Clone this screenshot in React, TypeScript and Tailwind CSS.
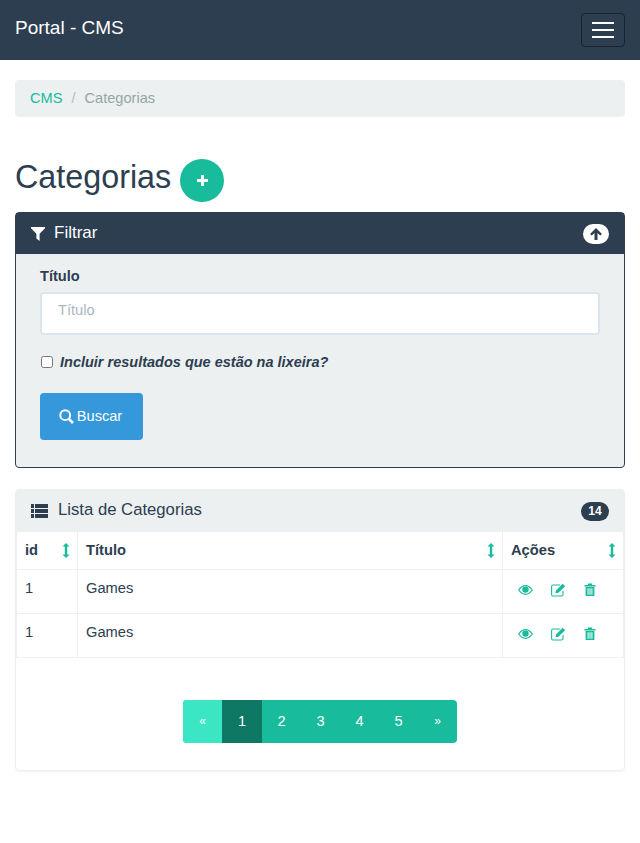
const rows = [
  { id: 1, title: 'Games' },
  { id: 1, title: 'Games' },
];

const pages = ['1', '2', '3', '4', '5'];

function SortIcon() {
  return (
    <svg width="8" height="15" viewBox="0 0 8 15" className="text-[#18bc9c] -mr-[1px]" fill="currentColor">
      <path d="M4 0 L7.5 3.6 H5.2 V11.4 H7.5 L4 15 L0.5 11.4 H2.8 V3.6 H0.5 Z" />
    </svg>
  );
}

function PlusIcon() {
  return (
    <svg width="11" height="11" viewBox="0 0 11 11" fill="currentColor">
      <path d="M4 0 H7 V4 H11 V7 H7 V11 H4 V7 H0 V4 H4 Z" />
    </svg>
  );
}

function FilterIcon() {
  return (
    <svg width="14" height="14" viewBox="0 0 14 14" fill="currentColor">
      <path d="M0 0 H14 V1.2 L8.6 6.8 V14 L5.4 11.4 V6.8 L0 1.2 Z" />
    </svg>
  );
}

function ArrowUpIcon() {
  return (
    <svg width="12" height="12" viewBox="0 0 12 12" fill="currentColor">
      <path d="M6 0 L12 6 L10.2 7.6 L7.5 4.9 V12 H4.5 V4.9 L1.8 7.6 L0 6 Z" />
    </svg>
  );
}

function SearchIcon() {
  return (
    <svg width="15" height="15" viewBox="0 0 15 15" fill="none" stroke="currentColor">
      <circle cx="6.2" cy="6.2" r="4.9" strokeWidth="2" />
      <path d="M9.8 9.8 L14 14" strokeWidth="2.6" />
    </svg>
  );
}

function ListIcon() {
  return (
    <svg width="17" height="14" viewBox="0 0 17 14" fill="currentColor">
      <path d="M0 0 H3 V4 H0 Z M4 0 H17 V4 H4 Z M0 5 H3 V9 H0 Z M4 5 H17 V9 H4 Z M0 10 H3 V14 H0 Z M4 10 H17 V14 H4 Z" />
    </svg>
  );
}

function EyeIcon() {
  return (
    <svg width="15" height="10" viewBox="0 0 15 10">
      <path d="M0.7 5 C3 1.8 5.2 0.7 7.5 0.7 C9.8 0.7 12 1.8 14.3 5 C12 8.2 9.8 9.3 7.5 9.3 C5.2 9.3 3 8.2 0.7 5 Z" fill="none" stroke="currentColor" strokeWidth="1.2" />
      <circle cx="7.5" cy="4.6" r="3.2" fill="currentColor" />
    </svg>
  );
}

function EditIcon() {
  return (
    <svg width="15" height="14" viewBox="0 0 15 14" fill="none" stroke="currentColor">
      <path d="M12 8 V11.5 C12 12.4 11.4 13 10.5 13 H2 C1.1 13 0.6 12.4 0.6 11.5 V3.5 C0.6 2.6 1.1 2 2 2 H9" strokeWidth="1.1" />
      <path d="M4.5 10 L5 7.6 L11.6 0.8 L14.2 3.2 L7 10 Z" fill="currentColor" stroke="none" />
    </svg>
  );
}

function TrashIcon() {
  return (
    <svg width="12" height="13" viewBox="0 0 12 13" fill="currentColor">
      <path d="M0.5 2 H4 V0.5 H8 V2 H11.5 V3.4 H0.5 Z" />
      <path fillRule="evenodd" d="M1.6 4 H10.4 V13 H1.6 Z M3.6 5.2 V11.8 H4.6 V5.2 Z M5.5 5.2 V11.8 H6.5 V5.2 Z M7.4 5.2 V11.8 H8.4 V5.2 Z" />
    </svg>
  );
}

function HeadCell({ label, className }: { label: string; className: string }) {
  return (
    <th className={`border border-[#ecf0f1] border-t-0 h-[37px] px-2 ${className}`}>
      <div className="flex items-center justify-between">
        <span className="font-bold">{label}</span>
        <SortIcon />
      </div>
    </th>
  );
}

export default function App() {
  return (
    <div className="min-h-[843px] bg-white text-[15px] leading-[22.5px] text-[#2c3e50] font-['Liberation_Sans',Arial,sans-serif]">
      {/* navbar */}
      <nav className="h-[60px] bg-[#2c3e50] px-[15px] flex items-center justify-between">
        <span className="text-[19px] text-white -mt-[3px]">Portal - CMS</span>
        <button className="w-[44px] h-[34px] border border-[#1a242f] rounded flex flex-col items-center justify-center gap-[5px]">
          <span className="block w-[22px] h-[2px] bg-white" />
          <span className="block w-[22px] h-[2px] bg-white" />
          <span className="block w-[22px] h-[2px] bg-white" />
        </button>
      </nav>

      <main className="px-[15px] pt-[20px]">
        {/* breadcrumb */}
        <div className="h-[37px] bg-[#ecf0f1] rounded px-[15px] flex items-center text-[14.6px]">
          <span className="text-[#18bc9c]">CMS</span>
          <span className="text-[#b4bcc2] pl-[9px] pr-[9px]">/</span>
          <span className="text-[#95a5a6]">Categorias</span>
        </div>

        {/* title */}
        <div className="mt-[42px] h-[43px] flex items-start">
          <h1 className="text-[32.3px] leading-[37px] font-normal">Categorias</h1>
          <button className="ml-[9px] w-[44px] h-[43px] rounded-full bg-[#18bc9c] text-white flex items-center justify-center">
            <PlusIcon />
          </button>
        </div>

        {/* filter */}
        <section className="mt-[10px] h-[256px] border border-[#2c3e50] rounded bg-[#ecf0f1]">
          <div className="h-[41px] bg-[#2c3e50] text-white flex items-center justify-between pl-[15px] pr-[15px]">
            <div className="flex items-center">
              <FilterIcon />
              <span className="ml-[9px] text-[17px]">Filtrar</span>
            </div>
            <span className="w-[26px] h-[20px] rounded-full bg-white text-[#2c3e50] flex items-center justify-center">
              <ArrowUpIcon />
            </span>
          </div>
          <div className="px-[24px] pt-[11px]">
            <label className="block font-bold text-[14.6px]">Título</label>
            <input
              placeholder="Título"
              className="mt-[4px] block w-[560px] h-[43px] border-2 border-[#dce4ec] rounded bg-white px-[16px] pb-[7px] text-[14.6px] outline-none placeholder:text-[#acb6c0]"
            />
            <label className="mt-[16px] flex items-center font-bold italic text-[14.5px]">
              <input type="checkbox" className="ml-[1px] w-[12px] h-[12px]" />
              <span className="ml-[7px]">Incluir resultados que estão na lixeira?</span>
            </label>
            <button className="mt-[20px] w-[103px] h-[47px] rounded bg-[#3498db] text-white flex items-center justify-center text-[14.6px]">
              <span className="-ml-[2px]"><SearchIcon /></span>
              <span className="ml-[3px]">Buscar</span>
            </button>
          </div>
        </section>

        {/* list */}
        <section className="mt-[21px] h-[282px] border border-[#ecf0f1] rounded shadow-[0_1px_2px_rgba(0,0,0,0.06)]">
          <div className="h-[42px] bg-[#ecf0f1] flex items-center justify-between pl-[15px] pr-[15px]">
            <div className="flex items-center">
              <ListIcon />
              <span className="ml-[10px] text-[16.7px] -mt-[1px]">Lista de Categorias</span>
            </div>
            <span className="h-[19px] w-[28px] text-center rounded-full bg-[#2c3e50] text-white text-[12px] leading-[19px] font-bold">14</span>
          </div>
          <table className="w-full table-fixed border-collapse text-[14.7px]">
            <thead>
              <tr>
                <HeadCell label="id" className="w-[61px]" />
                <HeadCell label="Título" className="text-left" />
                <HeadCell label="Ações" className="w-[121px]" />
              </tr>
            </thead>
            <tbody>
              {rows.map((row, i) => (
                <tr key={i}>
                  <td className="border border-[#ecf0f1] h-[44px] px-2 pb-[6px]">{row.id}</td>
                  <td className="border border-[#ecf0f1] h-[44px] px-2 pb-[6px]">{row.title}</td>
                  <td className="border border-[#ecf0f1] h-[44px] pl-[15px]">
                    <div className="flex items-center text-[#18bc9c] mt-[-3px]">
                      <EyeIcon />
                      <span className="ml-[18px]"><EditIcon /></span>
                      <span className="ml-[18px]"><TrashIcon /></span>
                    </div>
                  </td>
                </tr>
              ))}
            </tbody>
          </table>

          {/* pagination */}
          <div className="mt-[42px] flex justify-center">
            <div className="flex h-[43px] rounded overflow-hidden text-white bg-[#18bc9c] text-[14.6px]">
              <span className="w-[39px] bg-[#3be6c4] flex items-center justify-center text-[12px]">«</span>
              {pages.map((p, i) => (
                <span
                  key={p}
                  className={i === 0 ? 'w-[40px] bg-[#0f7864] flex items-center justify-center' : 'w-[39px] flex items-center justify-center'}
                >
                  {p}
                </span>
              ))}
              <span className="w-[39px] flex items-center justify-center text-[12px]">»</span>
            </div>
          </div>
        </section>
      </main>
    </div>
  );
}
